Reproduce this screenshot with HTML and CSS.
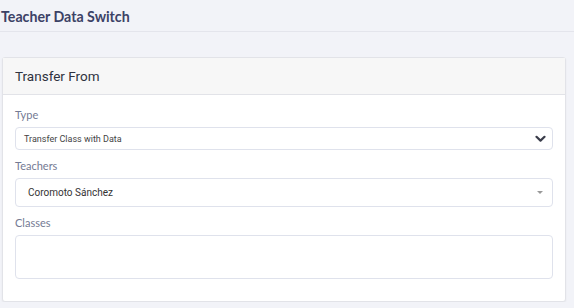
FILE: index.html
```html
<!DOCTYPE html>
<html lang="en">
<head>
  <meta charset="UTF-8" />
  <title>Teacher Data Switch</title>
  <link rel="stylesheet" href="styles.css">
</head>
<body>
  <div class="page-head">Teacher Data Switch</div>

  <div class="card">
    <div class="card-header">Transfer From</div>
    <div class="card-body">
      <label class="field-label">Type</label>
      <div class="select select-type">
        <span>Transfer Class with Data</span>
        <svg class="chevron" width="11" height="8" viewBox="0 0 11 8">
          <path d="M1.5 1.8 L5.5 5.6 L9.5 1.8" fill="none" stroke="#3a3d4a" stroke-width="2.2" stroke-linecap="round" stroke-linejoin="round" />
        </svg>
      </div>

      <label class="field-label">Teachers</label>
      <div class="select select-teacher">
        <span>Coromoto Sánchez</span>
        <span class="caret"></span>
      </div>

      <label class="field-label">Classes</label>
      <div class="textbox"></div>
    </div>
  </div>
</body>
</html>
```
FILE: styles.css
```css
* { box-sizing: border-box; }
body {
  margin: 0;
  font-family: Lato, "Open Sans", sans-serif;
  background: #f2f3f8;
  color: #333;
}
.page-head {
  height: 32px;
  padding: 8px 0 0 1px;
  font-size: 14.2px;
  font-weight: 700;
  color: #3c4266;
  border-bottom: 1px solid #e4e5ec;
}
.card {
  margin: 25px 8px 0 2px;
  background: #fff;
  border: 1px solid #e2e3e8;
  border-radius: 3px;
  box-shadow: 0 1px 2px rgba(0,0,0,0.06);
}
.card-header {
  height: 37px;
  padding: 10px 12px 0;
  background: #f7f7f7;
  border-bottom: 1px solid #e2e3e8;
  font-family: Roboto, sans-serif;
  font-size: 13.5px;
  color: #2f3340;
}
.card-body {
  padding: 13px 12px 22px;
}
.field-label {
  display: block;
  font-size: 11px;
  color: #747a93;
  line-height: 14px;
  margin-bottom: 5px;
}
.select {
  display: flex;
  align-items: center;
  justify-content: space-between;
  background: #fff;
  border: 1px solid #dfe2ec;
  border-radius: 4px;
  margin-bottom: 9px;
}
.select-type {
  height: 23px;
  padding: 0 6px 0 8px;
  font-family: Roboto, sans-serif;
  font-size: 9px;
  color: #444;
}
.select-teacher {
  height: 29px;
  padding: 0 9px 0 12px;
  font-family: Roboto, sans-serif;
  font-size: 10px;
  color: #333;
}
.caret {
  width: 0;
  height: 0;
  border-left: 3.5px solid transparent;
  border-right: 3.5px solid transparent;
  border-top: 3.5px solid #999;
}
.textbox {
  height: 44px;
  border: 1px solid #dfe2ec;
  border-radius: 4px;
}
```
